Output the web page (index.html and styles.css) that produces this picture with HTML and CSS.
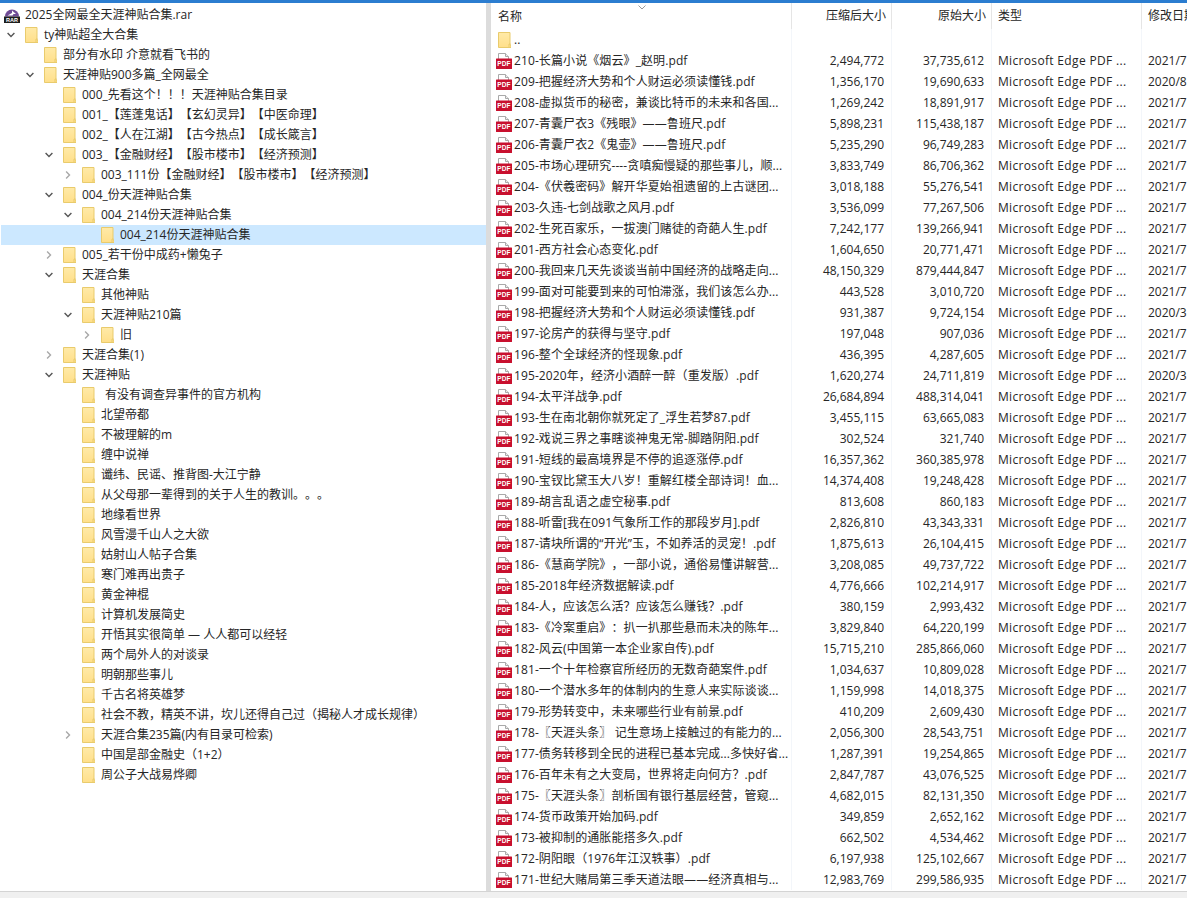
FILE: index.html
```html
<!DOCTYPE html>
<html lang="zh-CN">
<head>
<meta charset="utf-8">
<title>2025全网最全天涯神贴合集.rar</title>
<link rel="stylesheet" href="styles.css">
</head>
<body>
<svg class="defs" width="0" height="0" aria-hidden="true">
  <defs>
    <linearGradient id="fg" x1="0" y1="0" x2="0" y2="1">
      <stop offset="0" stop-color="#ffeaa8"/>
      <stop offset="1" stop-color="#ffdf8a"/>
    </linearGradient>
    <symbol id="folder" viewBox="0 0 13 16">
      <path d="M.5.5h11.5v12.5h1v2.500H.5z" fill="url(#fg)" stroke="#e9cb6c"/>
      <path d="M11 15v-3h1.500" fill="none" stroke="#e9cb6c"/>
    </symbol>
    <symbol id="open" viewBox="0 0 8 5">
      <path d="M.6.6 4 4l3.400-3.400" fill="none" stroke="#555" stroke-width="1.400"/>
    </symbol>
    <symbol id="closed" viewBox="0 0 5 8">
      <path d="M.6.6 4 4 .6 7.400" fill="none" stroke="#a8a8a8" stroke-width="1.400"/>
    </symbol>
    <symbol id="pdf" viewBox="0 0 16 16">
      <path d="M2.500.5h7l3 3v5h-10z" fill="#fff" stroke="#a9a9a9"/>
      <path d="M9.500.5v3h3" fill="#eee" stroke="#a9a9a9"/>
      <rect x="0" y="5.500" width="16" height="10.500" rx=".5" fill="#c8102e"/>
      <text x="8" y="13.300" text-anchor="middle" class="pdf-label">PDF</text>
    </symbol>
    <symbol id="rar" viewBox="0 0 16 16">
      <path d="M1 9.500a7 7 0 0 1 14 0z" fill="#6f4b96"/>
      <path d="M3.500 8.500 8 6V3.500L12 7H9.500l-1 1.500z" fill="#fff"/>
      <rect x="0" y="9.500" width="16" height="6.500" fill="#1d1d1d"/>
      <text x="8" y="14.800" text-anchor="middle" class="rar-label">RAR</text>
    </symbol>
  </defs>
</svg>
<div class="topbar"></div>
<main class="window">
  <nav class="tree">
    <div class="tree-row l0"><svg class="rar-icon"><use href="#rar"/></svg><span>2025全网最全天涯神贴合集.rar</span></div>
    <div class="tree-row l1"><svg class="chev"><use href="#open"/></svg><svg class="folder"><use href="#folder"/></svg><span>ty神贴超全大合集</span></div>
    <div class="tree-row l2"><i class="chev"></i><svg class="folder"><use href="#folder"/></svg><span>部分有水印 介意就看飞书的</span></div>
    <div class="tree-row l2"><svg class="chev"><use href="#open"/></svg><svg class="folder"><use href="#folder"/></svg><span>天涯神贴900多篇_全网最全</span></div>
    <div class="tree-row l3"><i class="chev"></i><svg class="folder"><use href="#folder"/></svg><span>000_先看这个！！！天涯神贴合集目录</span></div>
    <div class="tree-row l3"><i class="chev"></i><svg class="folder"><use href="#folder"/></svg><span>001_【莲蓬鬼话】【玄幻灵异】【中医命理】</span></div>
    <div class="tree-row l3"><i class="chev"></i><svg class="folder"><use href="#folder"/></svg><span>002_【人在江湖】【古今热点】【成长箴言】</span></div>
    <div class="tree-row l3"><svg class="chev"><use href="#open"/></svg><svg class="folder"><use href="#folder"/></svg><span>003_【金融财经】【股市楼市】【经济预测】</span></div>
    <div class="tree-row l4"><svg class="chev"><use href="#closed"/></svg><svg class="folder"><use href="#folder"/></svg><span>003_111份【金融财经】【股市楼市】【经济预测】</span></div>
    <div class="tree-row l3"><svg class="chev"><use href="#open"/></svg><svg class="folder"><use href="#folder"/></svg><span>004_份天涯神贴合集</span></div>
    <div class="tree-row l4"><svg class="chev"><use href="#open"/></svg><svg class="folder"><use href="#folder"/></svg><span>004_214份天涯神贴合集</span></div>
    <div class="tree-row l5 selected"><i class="chev"></i><svg class="folder"><use href="#folder"/></svg><span>004_214份天涯神贴合集</span></div>
    <div class="tree-row l3"><svg class="chev"><use href="#closed"/></svg><svg class="folder"><use href="#folder"/></svg><span>005_若干份中成药+懒兔子</span></div>
    <div class="tree-row l3"><svg class="chev"><use href="#open"/></svg><svg class="folder"><use href="#folder"/></svg><span>天涯合集</span></div>
    <div class="tree-row l4"><i class="chev"></i><svg class="folder"><use href="#folder"/></svg><span>其他神贴</span></div>
    <div class="tree-row l4"><svg class="chev"><use href="#open"/></svg><svg class="folder"><use href="#folder"/></svg><span>天涯神贴210篇</span></div>
    <div class="tree-row l5"><svg class="chev"><use href="#closed"/></svg><svg class="folder"><use href="#folder"/></svg><span>旧</span></div>
    <div class="tree-row l3"><svg class="chev"><use href="#closed"/></svg><svg class="folder"><use href="#folder"/></svg><span>天涯合集(1)</span></div>
    <div class="tree-row l3"><svg class="chev"><use href="#open"/></svg><svg class="folder"><use href="#folder"/></svg><span>天涯神贴</span></div>
    <div class="tree-row l4"><i class="chev"></i><svg class="folder"><use href="#folder"/></svg><span class="lead">有没有调查异事件的官方机构</span></div>
    <div class="tree-row l4"><i class="chev"></i><svg class="folder"><use href="#folder"/></svg><span>北望帝都</span></div>
    <div class="tree-row l4"><i class="chev"></i><svg class="folder"><use href="#folder"/></svg><span>不被理解的m</span></div>
    <div class="tree-row l4"><i class="chev"></i><svg class="folder"><use href="#folder"/></svg><span>缠中说禅</span></div>
    <div class="tree-row l4"><i class="chev"></i><svg class="folder"><use href="#folder"/></svg><span>谶纬、民谣、推背图-大江宁静</span></div>
    <div class="tree-row l4"><i class="chev"></i><svg class="folder"><use href="#folder"/></svg><span>从父母那一辈得到的关于人生的教训。。。</span></div>
    <div class="tree-row l4"><i class="chev"></i><svg class="folder"><use href="#folder"/></svg><span>地缘看世界</span></div>
    <div class="tree-row l4"><i class="chev"></i><svg class="folder"><use href="#folder"/></svg><span>风雪漫千山人之大欲</span></div>
    <div class="tree-row l4"><i class="chev"></i><svg class="folder"><use href="#folder"/></svg><span>姑射山人帖子合集</span></div>
    <div class="tree-row l4"><i class="chev"></i><svg class="folder"><use href="#folder"/></svg><span>寒门难再出贵子</span></div>
    <div class="tree-row l4"><i class="chev"></i><svg class="folder"><use href="#folder"/></svg><span>黄金神棍</span></div>
    <div class="tree-row l4"><i class="chev"></i><svg class="folder"><use href="#folder"/></svg><span>计算机发展简史</span></div>
    <div class="tree-row l4"><i class="chev"></i><svg class="folder"><use href="#folder"/></svg><span>开悟其实很简单 — 人人都可以经轻</span></div>
    <div class="tree-row l4"><i class="chev"></i><svg class="folder"><use href="#folder"/></svg><span>两个局外人的对谈录</span></div>
    <div class="tree-row l4"><i class="chev"></i><svg class="folder"><use href="#folder"/></svg><span>明朝那些事儿</span></div>
    <div class="tree-row l4"><i class="chev"></i><svg class="folder"><use href="#folder"/></svg><span>千古名将英雄梦</span></div>
    <div class="tree-row l4"><i class="chev"></i><svg class="folder"><use href="#folder"/></svg><span>社会不教，精英不讲，坎儿还得自己过（揭秘人才成长规律）</span></div>
    <div class="tree-row l4"><svg class="chev"><use href="#closed"/></svg><svg class="folder"><use href="#folder"/></svg><span>天涯合集235篇(内有目录可检索)</span></div>
    <div class="tree-row l4"><i class="chev"></i><svg class="folder"><use href="#folder"/></svg><span>中国是部金融史（1+2）</span></div>
    <div class="tree-row l4"><i class="chev"></i><svg class="folder"><use href="#folder"/></svg><span>周公子大战易烨卿</span></div>
  </nav>
  <div class="splitter"></div>
  <section class="files">
    <div class="file-row header">
      <div class="cell name"><span>名称</span><svg class="sort" viewBox="0 0 8 5"><path d="M.5.5 4 4 7.500.5" fill="none" stroke="#9a9a9a"/></svg></div>
      <div class="cell num">压缩后大小</div><div class="cell num">原始大小</div><div class="cell">类型</div><div class="cell">修改日期</div>
    </div>
    <div class="file-row"><div class="cell name"><svg class="folder up"><use href="#folder"/></svg><span>..</span></div><div class="cell num"></div><div class="cell num"></div><div class="cell"></div><div class="cell"></div></div>
    <div class="file-row"><div class="cell name"><svg class="pdf"><use href="#pdf"/></svg><span>210-长篇小说《烟云》_赵明.pdf</span></div><div class="cell num">2,494,772</div><div class="cell num">37,735,612</div><div class="cell type">Microsoft Edge PDF ...</div><div class="cell">2021/7</div></div>
    <div class="file-row"><div class="cell name"><svg class="pdf"><use href="#pdf"/></svg><span>209-把握经济大势和个人财运必须读懂钱.pdf</span></div><div class="cell num">1,356,170</div><div class="cell num">19,690,633</div><div class="cell type">Microsoft Edge PDF ...</div><div class="cell">2020/8</div></div>
    <div class="file-row"><div class="cell name"><svg class="pdf"><use href="#pdf"/></svg><span>208-虚拟货币的秘密，兼谈比特币的未来和各国...</span></div><div class="cell num">1,269,242</div><div class="cell num">18,891,917</div><div class="cell type">Microsoft Edge PDF ...</div><div class="cell">2021/7</div></div>
    <div class="file-row"><div class="cell name"><svg class="pdf"><use href="#pdf"/></svg><span>207-青囊尸衣3《残眼》——鲁班尺.pdf</span></div><div class="cell num">5,898,231</div><div class="cell num">115,438,187</div><div class="cell type">Microsoft Edge PDF ...</div><div class="cell">2021/7</div></div>
    <div class="file-row"><div class="cell name"><svg class="pdf"><use href="#pdf"/></svg><span>206-青囊尸衣2《鬼壶》——鲁班尺.pdf</span></div><div class="cell num">5,235,290</div><div class="cell num">96,749,283</div><div class="cell type">Microsoft Edge PDF ...</div><div class="cell">2021/7</div></div>
    <div class="file-row"><div class="cell name"><svg class="pdf"><use href="#pdf"/></svg><span>205-市场心理研究----贪嗔痴慢疑的那些事儿，顺...</span></div><div class="cell num">3,833,749</div><div class="cell num">86,706,362</div><div class="cell type">Microsoft Edge PDF ...</div><div class="cell">2021/7</div></div>
    <div class="file-row"><div class="cell name"><svg class="pdf"><use href="#pdf"/></svg><span>204-《伏羲密码》解开华夏始祖遗留的上古谜团...</span></div><div class="cell num">3,018,188</div><div class="cell num">55,276,541</div><div class="cell type">Microsoft Edge PDF ...</div><div class="cell">2021/7</div></div>
    <div class="file-row"><div class="cell name"><svg class="pdf"><use href="#pdf"/></svg><span>203-久违-七剑战歌之风月.pdf</span></div><div class="cell num">3,536,099</div><div class="cell num">77,267,506</div><div class="cell type">Microsoft Edge PDF ...</div><div class="cell">2021/7</div></div>
    <div class="file-row"><div class="cell name"><svg class="pdf"><use href="#pdf"/></svg><span>202-生死百家乐，一拔澳门赌徒的奇葩人生.pdf</span></div><div class="cell num">7,242,177</div><div class="cell num">139,266,941</div><div class="cell type">Microsoft Edge PDF ...</div><div class="cell">2021/7</div></div>
    <div class="file-row"><div class="cell name"><svg class="pdf"><use href="#pdf"/></svg><span>201-西方社会心态变化.pdf</span></div><div class="cell num">1,604,650</div><div class="cell num">20,771,471</div><div class="cell type">Microsoft Edge PDF ...</div><div class="cell">2021/7</div></div>
    <div class="file-row"><div class="cell name"><svg class="pdf"><use href="#pdf"/></svg><span>200-我回来几天先谈谈当前中国经济的战略走向...</span></div><div class="cell num">48,150,329</div><div class="cell num">879,444,847</div><div class="cell type">Microsoft Edge PDF ...</div><div class="cell">2021/7</div></div>
    <div class="file-row"><div class="cell name"><svg class="pdf"><use href="#pdf"/></svg><span>199-面对可能要到来的可怕滞涨，我们该怎么办...</span></div><div class="cell num">443,528</div><div class="cell num">3,010,720</div><div class="cell type">Microsoft Edge PDF ...</div><div class="cell">2021/7</div></div>
    <div class="file-row"><div class="cell name"><svg class="pdf"><use href="#pdf"/></svg><span>198-把握经济大势和个人财运必须读懂钱.pdf</span></div><div class="cell num">931,387</div><div class="cell num">9,724,154</div><div class="cell type">Microsoft Edge PDF ...</div><div class="cell">2020/3</div></div>
    <div class="file-row"><div class="cell name"><svg class="pdf"><use href="#pdf"/></svg><span>197-论房产的获得与坚守.pdf</span></div><div class="cell num">197,048</div><div class="cell num">907,036</div><div class="cell type">Microsoft Edge PDF ...</div><div class="cell">2021/7</div></div>
    <div class="file-row"><div class="cell name"><svg class="pdf"><use href="#pdf"/></svg><span>196-整个全球经济的怪现象.pdf</span></div><div class="cell num">436,395</div><div class="cell num">4,287,605</div><div class="cell type">Microsoft Edge PDF ...</div><div class="cell">2021/7</div></div>
    <div class="file-row"><div class="cell name"><svg class="pdf"><use href="#pdf"/></svg><span>195-2020年，经济小酒醉一醉（重发版）.pdf</span></div><div class="cell num">1,620,274</div><div class="cell num">24,711,819</div><div class="cell type">Microsoft Edge PDF ...</div><div class="cell">2020/3</div></div>
    <div class="file-row"><div class="cell name"><svg class="pdf"><use href="#pdf"/></svg><span>194-太平洋战争.pdf</span></div><div class="cell num">26,684,894</div><div class="cell num">488,314,041</div><div class="cell type">Microsoft Edge PDF ...</div><div class="cell">2021/7</div></div>
    <div class="file-row"><div class="cell name"><svg class="pdf"><use href="#pdf"/></svg><span>193-生在南北朝你就死定了_浮生若梦87.pdf</span></div><div class="cell num">3,455,115</div><div class="cell num">63,665,083</div><div class="cell type">Microsoft Edge PDF ...</div><div class="cell">2021/7</div></div>
    <div class="file-row"><div class="cell name"><svg class="pdf"><use href="#pdf"/></svg><span>192-戏说三界之事瞎谈神鬼无常-脚踏阴阳.pdf</span></div><div class="cell num">302,524</div><div class="cell num">321,740</div><div class="cell type">Microsoft Edge PDF ...</div><div class="cell">2021/7</div></div>
    <div class="file-row"><div class="cell name"><svg class="pdf"><use href="#pdf"/></svg><span>191-短线的最高境界是不停的追逐涨停.pdf</span></div><div class="cell num">16,357,362</div><div class="cell num">360,385,978</div><div class="cell type">Microsoft Edge PDF ...</div><div class="cell">2021/7</div></div>
    <div class="file-row"><div class="cell name"><svg class="pdf"><use href="#pdf"/></svg><span>190-宝钗比黛玉大八岁！重解红楼全部诗词！血...</span></div><div class="cell num">14,374,408</div><div class="cell num">19,248,428</div><div class="cell type">Microsoft Edge PDF ...</div><div class="cell">2021/7</div></div>
    <div class="file-row"><div class="cell name"><svg class="pdf"><use href="#pdf"/></svg><span>189-胡言乱语之虚空秘事.pdf</span></div><div class="cell num">813,608</div><div class="cell num">860,183</div><div class="cell type">Microsoft Edge PDF ...</div><div class="cell">2021/7</div></div>
    <div class="file-row"><div class="cell name"><svg class="pdf"><use href="#pdf"/></svg><span>188-听雷[我在091气象所工作的那段岁月].pdf</span></div><div class="cell num">2,826,810</div><div class="cell num">43,343,331</div><div class="cell type">Microsoft Edge PDF ...</div><div class="cell">2021/7</div></div>
    <div class="file-row"><div class="cell name"><svg class="pdf"><use href="#pdf"/></svg><span>187-请块所谓的“开光”玉，不如养活的灵宠！.pdf</span></div><div class="cell num">1,875,613</div><div class="cell num">26,104,415</div><div class="cell type">Microsoft Edge PDF ...</div><div class="cell">2021/7</div></div>
    <div class="file-row"><div class="cell name"><svg class="pdf"><use href="#pdf"/></svg><span>186-《慧商学院》，一部小说，通俗易懂讲解营...</span></div><div class="cell num">3,208,085</div><div class="cell num">49,737,722</div><div class="cell type">Microsoft Edge PDF ...</div><div class="cell">2021/7</div></div>
    <div class="file-row"><div class="cell name"><svg class="pdf"><use href="#pdf"/></svg><span>185-2018年经济数据解读.pdf</span></div><div class="cell num">4,776,666</div><div class="cell num">102,214,917</div><div class="cell type">Microsoft Edge PDF ...</div><div class="cell">2021/7</div></div>
    <div class="file-row"><div class="cell name"><svg class="pdf"><use href="#pdf"/></svg><span>184-人，应该怎么活？应该怎么赚钱？.pdf</span></div><div class="cell num">380,159</div><div class="cell num">2,993,432</div><div class="cell type">Microsoft Edge PDF ...</div><div class="cell">2021/7</div></div>
    <div class="file-row"><div class="cell name"><svg class="pdf"><use href="#pdf"/></svg><span>183-《冷案重启》：扒一扒那些悬而未决的陈年...</span></div><div class="cell num">3,829,840</div><div class="cell num">64,220,199</div><div class="cell type">Microsoft Edge PDF ...</div><div class="cell">2021/7</div></div>
    <div class="file-row"><div class="cell name"><svg class="pdf"><use href="#pdf"/></svg><span>182-风云(中国第一本企业家自传).pdf</span></div><div class="cell num">15,715,210</div><div class="cell num">285,866,060</div><div class="cell type">Microsoft Edge PDF ...</div><div class="cell">2021/7</div></div>
    <div class="file-row"><div class="cell name"><svg class="pdf"><use href="#pdf"/></svg><span>181-一个十年检察官所经历的无数奇葩案件.pdf</span></div><div class="cell num">1,034,637</div><div class="cell num">10,809,028</div><div class="cell type">Microsoft Edge PDF ...</div><div class="cell">2021/7</div></div>
    <div class="file-row"><div class="cell name"><svg class="pdf"><use href="#pdf"/></svg><span>180-一个潜水多年的体制内的生意人来实际谈谈...</span></div><div class="cell num">1,159,998</div><div class="cell num">14,018,375</div><div class="cell type">Microsoft Edge PDF ...</div><div class="cell">2021/7</div></div>
    <div class="file-row"><div class="cell name"><svg class="pdf"><use href="#pdf"/></svg><span>179-形势转变中，未来哪些行业有前景.pdf</span></div><div class="cell num">410,209</div><div class="cell num">2,609,430</div><div class="cell type">Microsoft Edge PDF ...</div><div class="cell">2021/7</div></div>
    <div class="file-row"><div class="cell name"><svg class="pdf"><use href="#pdf"/></svg><span>178-〖天涯头条〗 记生意场上接触过的有能力的...</span></div><div class="cell num">2,056,300</div><div class="cell num">28,543,751</div><div class="cell type">Microsoft Edge PDF ...</div><div class="cell">2021/7</div></div>
    <div class="file-row"><div class="cell name"><svg class="pdf"><use href="#pdf"/></svg><span>177-债务转移到全民的进程已基本完成...多快好省...</span></div><div class="cell num">1,287,391</div><div class="cell num">19,254,865</div><div class="cell type">Microsoft Edge PDF ...</div><div class="cell">2021/7</div></div>
    <div class="file-row"><div class="cell name"><svg class="pdf"><use href="#pdf"/></svg><span>176-百年未有之大变局，世界将走向何方？.pdf</span></div><div class="cell num">2,847,787</div><div class="cell num">43,076,525</div><div class="cell type">Microsoft Edge PDF ...</div><div class="cell">2021/7</div></div>
    <div class="file-row"><div class="cell name"><svg class="pdf"><use href="#pdf"/></svg><span>175-〖天涯头条〗剖析国有银行基层经营，管窥...</span></div><div class="cell num">4,682,015</div><div class="cell num">82,131,350</div><div class="cell type">Microsoft Edge PDF ...</div><div class="cell">2021/7</div></div>
    <div class="file-row"><div class="cell name"><svg class="pdf"><use href="#pdf"/></svg><span>174-货币政策开始加码.pdf</span></div><div class="cell num">349,859</div><div class="cell num">2,652,162</div><div class="cell type">Microsoft Edge PDF ...</div><div class="cell">2021/7</div></div>
    <div class="file-row"><div class="cell name"><svg class="pdf"><use href="#pdf"/></svg><span>173-被抑制的通胀能搭多久.pdf</span></div><div class="cell num">662,502</div><div class="cell num">4,534,462</div><div class="cell type">Microsoft Edge PDF ...</div><div class="cell">2021/7</div></div>
    <div class="file-row"><div class="cell name"><svg class="pdf"><use href="#pdf"/></svg><span>172-阴阳眼（1976年江汉轶事）.pdf</span></div><div class="cell num">6,197,938</div><div class="cell num">125,102,667</div><div class="cell type">Microsoft Edge PDF ...</div><div class="cell">2021/7</div></div>
    <div class="file-row"><div class="cell name"><svg class="pdf"><use href="#pdf"/></svg><span>171-世纪大赌局第三季天道法眼——经济真相与...</span></div><div class="cell num">12,983,769</div><div class="cell num">299,586,935</div><div class="cell type">Microsoft Edge PDF ...</div><div class="cell">2021/7</div></div>
  </section>
</main>
<div class="statusbar"></div>
</body>
</html>
```

FILE: styles.css
```css
* { box-sizing: border-box; }
html, body { height: 100%; }
body {
  margin: 0;
  display: flex;
  flex-direction: column;
  overflow: hidden;
  background: #fff;
  color: #262626;
  font: 12px/20px "Open Sans", "Noto Sans CJK SC", sans-serif;
  text-spacing-trim: space-all;
}
.defs { position: absolute; }
.pdf-label { font: 700 6.5px "Liberation Sans", sans-serif; fill: #fff; }
.rar-label { font: 700 5.5px "Liberation Sans", sans-serif; fill: #fff; }

.topbar { flex: none; height: 3px; background: #2b7dd0; }
.window { flex: 1; min-height: 0; display: flex; }
.statusbar { flex: none; height: 7px; background: #f0f0f0; border-top: 1px solid #d4d4d4; }

.tree { flex: none; width: 486px; padding: 2px 0 0 1px; overflow: hidden; }
.tree-row { display: flex; align-items: center; height: 20px; white-space: nowrap; }
.tree-row.selected { background: #cce8ff; }
.l0 { padding-left: 3px; }
.l1 { padding-left: 6px; }
.l2 { padding-left: 25px; }
.l3 { padding-left: 44px; }
.l4 { padding-left: 63px; }
.l5 { padding-left: 82px; }
.chev { flex: none; width: 8px; height: 8px; margin-right: 10px; }
.folder { flex: none; width: 13px; height: 16px; margin-right: 6px; }
.rar-icon { flex: none; width: 16px; height: 16px; margin-right: 5px; }
.lead { padding-left: 4px; }

.splitter { flex: none; width: 5px; background: #dcdcdc; }

.files { flex: 1; min-width: 0; overflow: hidden; }
.file-row {
  display: grid;
  grid-template-columns: 301px 100px 100px 150px 50px;
  height: 21px;
  line-height: 21px;
}
.file-row.header { height: 26px; line-height: 25px; }
.cell {
  padding: 0 7px 0 6px;
  border-right: 1px solid #f3f6fa;
  white-space: nowrap;
  overflow: hidden;
}
.header .cell { border-right-color: #e5e5e5; }
.num { text-align: right; }
.header .num { padding-right: 5px; }
.type { letter-spacing: .33px; }
.cell:last-child { border-right: 0; }
.name { display: flex; align-items: center; position: relative; padding: 0 9px 0 5px; letter-spacing: .1px; }
.header .name { padding-left: 7px; letter-spacing: 0; }
.pdf { flex: none; width: 16px; height: 16px; margin-right: 2px; }
.folder.up { margin: 0 3px 0 2px; }
.sort { position: absolute; left: 147px; top: 2px; width: 8px; height: 5px; }
```
